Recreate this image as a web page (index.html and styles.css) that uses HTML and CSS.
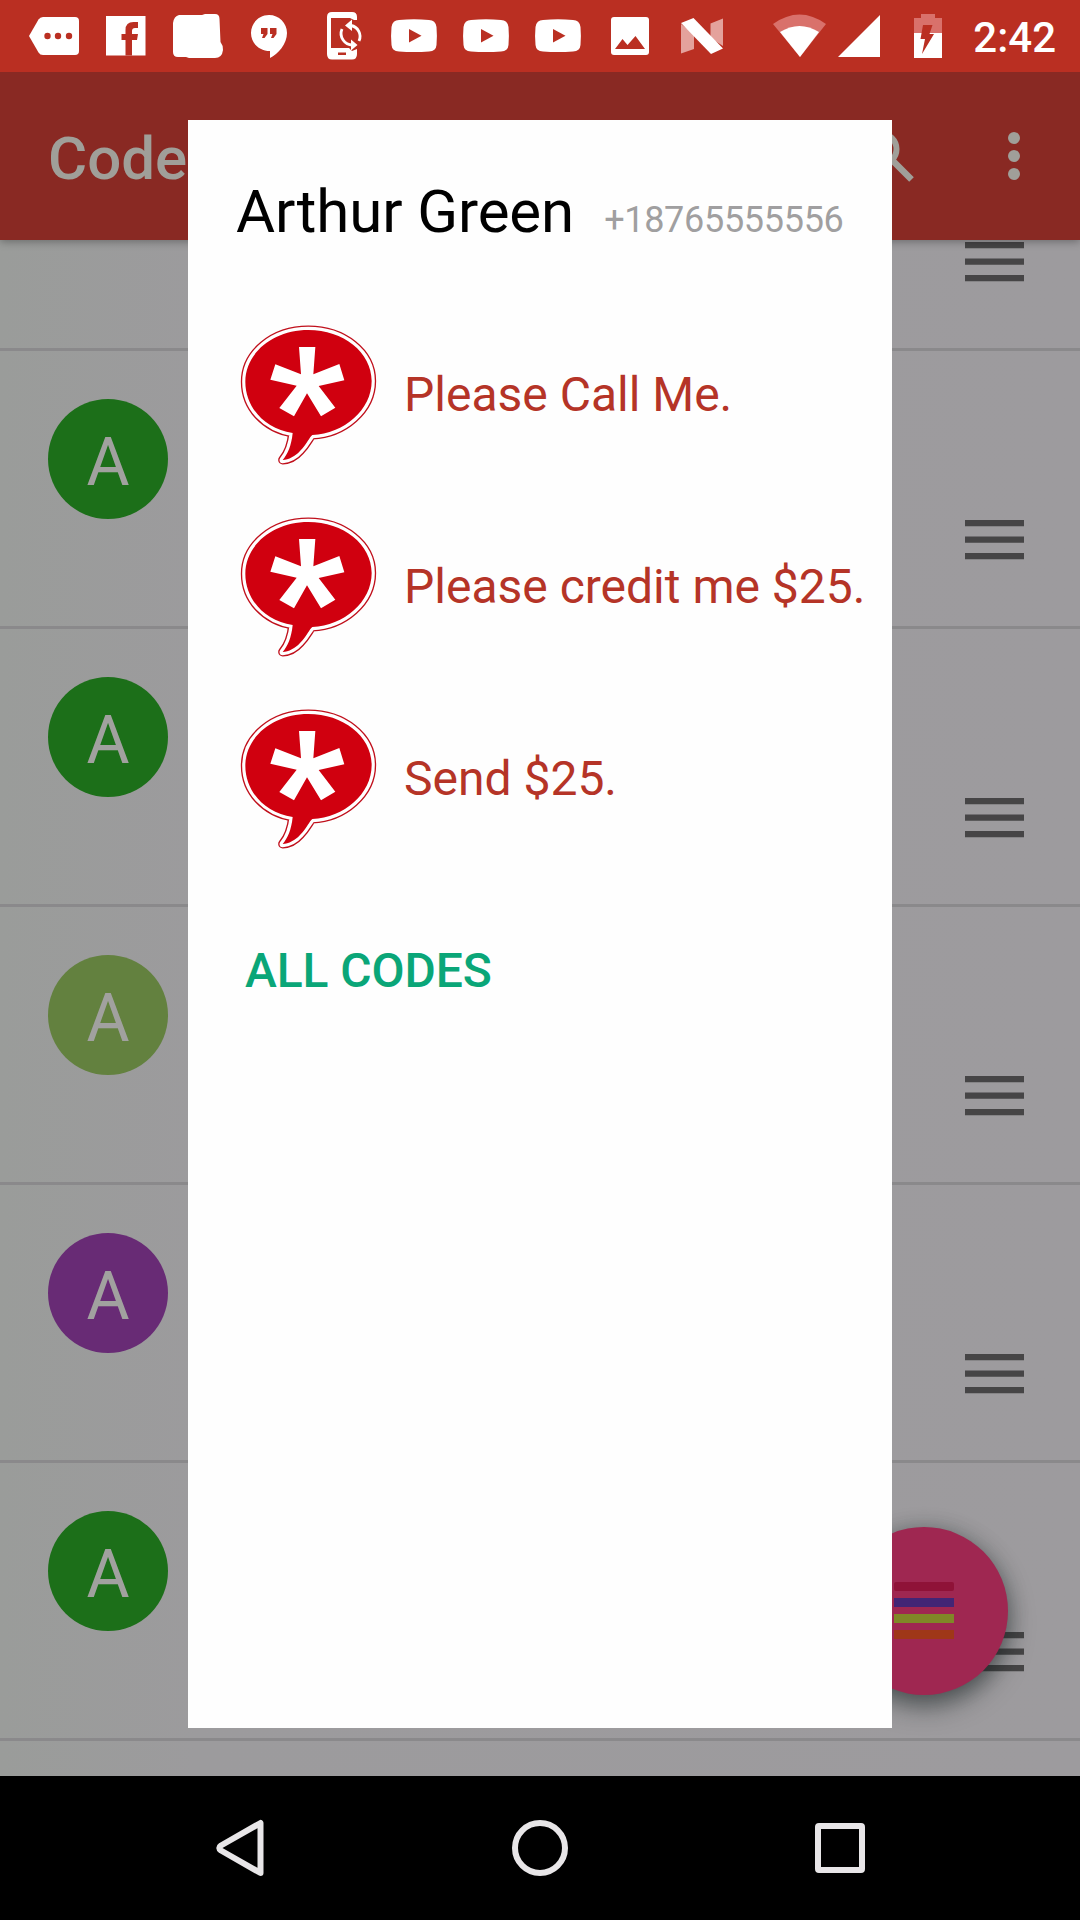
FILE: index.html
```html
<!DOCTYPE html>
<html lang="en">
<head>
<meta charset="utf-8">
<title>Codes</title>
<link rel="stylesheet" href="styles.css">
</head>
<body>
<svg class="defs" width="0" height="0">
  <defs>
    <symbol id="bubble" viewBox="60 45 411 423">
      <path class="b-rim" d="M265 60C370 60 455 127 455 213C455 300 372 371 277 375C268 381 263 400 240 423C226 439 206 449 188 450C203 432 214 408 218 369C135 356 76 293 76 215C76 130 158 60 265 60Z"/>
      <path class="b-fill" d="M265 60C370 60 455 127 455 213C455 300 372 371 277 375C268 381 263 400 240 423C226 439 206 449 188 450C203 432 214 408 218 369C135 356 76 293 76 215C76 130 158 60 265 60Z"/>
      <path fill="#fff" d="M237 111H286L280 193L358 162L373 211L296 228L346 293L303 319L261 250L222 319L178 294L230 227L151 209L166 163L243 193Z"/>
    </symbol>
    <symbol id="tube" viewBox="0 0 72 72">
      <path fill="#fff" d="M21 20Q36 18.500 51 20Q57.500 20 58.500 27Q59.300 36 58.500 45Q58 51 51 51.500Q36 52.700 21 51.500Q14 51 13.500 45Q12.600 36 13.500 27Q14.500 20 21 20Z"/>
      <path fill="#ba2f22" d="M31 29V42.500L43.500 35.700Z"/>
    </symbol>
    <symbol id="grip" viewBox="0 0 59 40">
      <path d="M0 0H59V6.300H0ZM0 16.500H59V22.800H0ZM0 33H59V39.300H0Z" fill="#464546"/>
    </symbol>
  </defs>
</svg>
<div class="phone">
  <header class="status">
    <div class="notices">
      <svg viewBox="0 0 72 72"><path fill="#fff" d="M25 17H57Q61 17 61 21V51Q61 55 57 55H25Q22 55 20.500 52.500L11 36L20.500 19.500Q22 17 25 17Z"/><g fill="#ba2f22"><circle cx="29.500" cy="36" r="3.200"/><circle cx="40" cy="36" r="3.200"/><circle cx="51" cy="36" r="3.200"/></g></svg>
      <svg viewBox="0 0 72 72"><path fill="#fff" d="M16 16H55.500V55.500H16Z"/><path fill="#ba2f22" d="M35.500 55.500V40H31.500V34H35.500V30Q35.500 22 43.500 22H48V28H45Q42 28 42 31V34H48L47 40H42V55.500Z"/></svg>
      <svg viewBox="0 0 72 72"><path fill="#fff" d="M17 15H40L43 14H53Q57.500 14 57.500 19L58.500 42Q61 45 61 50Q60 58 53 58H27L24 57H16Q11 57 11 52V23Q12 16 17 15Z"/></svg>
      <svg viewBox="0 0 72 72"><path fill="#fff" d="M35 15C45 15 53 23 53 33C53 44 44 54 36 58V51C25 51 17 43 17 33C17 23 25 15 35 15Z"/><path fill="#ba2f22" d="M27 28H33.500V34L30.500 38H28L29.500 34H27ZM36 28H42.500V34L39.500 38H37L38.500 34H36Z"/></svg>
      <svg viewBox="0 0 72 72"><path fill="#fff" d="M26 12H46Q51 12 51 17V20H48L44 18H25V48H43L46 51L51 49V54Q51 59.500 46 59.500H26Q21 59.500 21 54V17Q21 12 26 12Z"/><path fill="#ba2f22" d="M32 52.500H40V55H32Z"/><g fill="none" stroke="#fff" stroke-width="2.800"><path d="M45 25.500A11 11 0 0 1 53 41"/><path d="M36 29A11.500 11.500 0 0 0 47 45"/></g><path fill="#fff" d="M46 19.500V31L39 25.500ZM45 39.500V50.500L51.500 45Z"/></svg>
      <svg><use href="#tube"/></svg>
      <svg><use href="#tube"/></svg>
      <svg><use href="#tube"/></svg>
      <svg viewBox="0 0 72 72"><rect x="17" y="17" width="38" height="38" rx="3" fill="#fff"/><path fill="#ba2f22" d="M21 49L28.500 39L33.500 45L41.500 36L51 49Z"/></svg>
      <svg viewBox="0 0 72 72"><path fill="#e4a29c" d="M15 24L28 34V49L15 53.500ZM44.500 23.500L57 18.500V46L44.500 38Z"/><path fill="#fff" d="M15 23L27.500 18L57 48.500L45 54Z"/></svg>
    </div>
    <div class="system">
      <svg class="wifi" viewBox="0 0 54 72"><path fill="#d9716b" d="M0 24Q26.500 5 53 24L27 57Z"/><path fill="#fff" d="M7 32Q26.500 20 46 32L27 57Z"/></svg>
      <svg class="signal" viewBox="0 0 42 72"><path fill="#fff" d="M42 15V57H0Z"/></svg>
      <svg class="battery" viewBox="0 0 28 72"><path fill="#d9716b" d="M0 18H7V14H21V18H28V34H0Z"/><path fill="#fff" d="M0 33H28V58H0Z"/><path fill="#ba2f22" d="M9 25H18.500L15.500 34H20L8 54L11 39H6.500Z"/></svg>
      <span class="clock">2:42</span>
    </div>
  </header>
  <div class="appbar">
    <h1 class="title">Code</h1>
    <div class="actions">
      <svg class="search" viewBox="0 0 54 54"><circle cx="20" cy="20" r="15.500" fill="none" stroke="#a09f99" stroke-width="6"/><path d="M32 32L50.500 50.500" stroke="#a09f99" stroke-width="6.500"/></svg>
      <svg class="more" viewBox="0 0 12 48"><g fill="#a09f99"><circle cx="6" cy="6" r="6"/><circle cx="6" cy="24" r="6"/><circle cx="6" cy="42" r="6"/></g></svg>
    </div>
  </div>
  <main class="list">
    <div class="row first"><svg class="grip"><use href="#grip"/></svg></div>
    <div class="row"><span class="avatar green">A</span><svg class="grip"><use href="#grip"/></svg></div>
    <div class="row"><span class="avatar green">A</span><svg class="grip"><use href="#grip"/></svg></div>
    <div class="row"><span class="avatar olive">A</span><svg class="grip"><use href="#grip"/></svg></div>
    <div class="row"><span class="avatar purple">A</span><svg class="grip"><use href="#grip"/></svg></div>
    <div class="row"><span class="avatar green">A</span><svg class="grip"><use href="#grip"/></svg></div>
  </main>
  <div class="fab"><i class="bar crimson"></i><i class="bar indigo"></i><i class="bar lime"></i><i class="bar rust"></i></div>
  <nav class="navbar">
    <svg viewBox="0 0 60 60"><path d="M50.500 5V55L11 32.500Q7.500 30 11 27.500Z"/></svg>
    <svg viewBox="0 0 60 60"><circle cx="30" cy="30" r="25"/></svg>
    <svg viewBox="0 0 60 60"><rect x="8" y="8" width="44" height="44" rx="1"/></svg>
  </nav>
  <section class="dialog">
    <div class="who"><h2 class="name">Arthur Green</h2><span class="number">+18765555556</span></div>
    <ul class="codes">
      <li class="code"><svg class="bubble"><use href="#bubble"/></svg><span>Please Call Me.</span></li>
      <li class="code"><svg class="bubble"><use href="#bubble"/></svg><span>Please credit me $25.</span></li>
      <li class="code"><svg class="bubble"><use href="#bubble"/></svg><span>Send $25.</span></li>
    </ul>
    <button class="all">ALL CODES</button>
  </section>
</div>
</body>
</html>
```
FILE: styles.css
```css
* { box-sizing: border-box; }
body { margin: 0; background: #000; font-family: Roboto, "Liberation Sans", sans-serif; }
svg { display: block; flex: none; }
.defs { position: absolute; }
.phone { position: relative; display: flex; flex-direction: column; width: 1080px; height: 1920px; overflow: hidden; }

.status { position: relative; z-index: 2; flex: none; display: flex; justify-content: space-between; height: 72px; padding: 0 24px 0 18px; background: #ba2f22; }
.notices { display: flex; }
.notices svg { width: 72px; height: 72px; }
.system { display: flex; align-items: center; }
.wifi { width: 54px; height: 72px; margin-right: 11px; }
.signal { width: 42px; height: 72px; margin-right: 34px; }
.battery { width: 28px; height: 72px; margin-right: 31px; }
.clock { color: #fff; font-size: 42px; font-weight: 500; line-height: 72px; padding-top: 3px; }

.appbar { position: relative; z-index: 1; flex: none; display: flex; justify-content: space-between; align-items: center; height: 168px; padding: 0 60px 0 48px; background: #892923; box-shadow: 0 2px 8px rgba(0,0,0,.3); }
.title { margin: 0; padding-top: 5px; color: #a09f99; font-size: 60px; font-weight: 500; line-height: 70px; }
.actions { display: flex; align-items: center; gap: 93px; }
.search { width: 54px; height: 54px; }
.more { width: 12px; height: 48px; }

.list { flex: 1; background: linear-gradient(90deg, #9a9c9a, #9c9b9d 18%, #9d9b9e); overflow: hidden; }
.row { display: flex; justify-content: space-between; height: 278px; padding: 48px 56px 0 48px; border-bottom: 3px solid #8a898b; }
.row.first { justify-content: flex-end; height: 111px; padding-top: 0; }
.avatar { display: flex; align-items: center; justify-content: center; width: 120px; height: 120px; padding-top: 7px; border-radius: 50%; color: #a1a19f; font-size: 66px; }
.green { background: #1c6f19; }
.olive { background: #63813f; }
.purple { background: #682b75; }
.grip { width: 59px; height: 40px; margin-top: 121px; }
.first .grip { margin-top: 2px; }

.fab { position: absolute; left: 840px; top: 1527px; display: flex; flex-direction: column; align-items: center; justify-content: center; gap: 7px; width: 168px; height: 168px; padding-bottom: 2px; border-radius: 50%; background: #9f2751; box-shadow: 0 12px 24px rgba(20,30,30,.5), 0 0 20px rgba(20,30,30,.25); }
.bar { width: 60px; height: 9px; }
.crimson { background: #8f1238; border-radius: 2px; }
.indigo { background: #432575; }
.lime { background: #808727; }
.rust { background: #9f3718; }

.navbar { flex: none; display: flex; justify-content: space-between; align-items: center; height: 144px; padding: 0 210px; background: #000; }
.navbar svg { width: 60px; height: 60px; fill: none; stroke: #e8e6e8; stroke-width: 6; stroke-linejoin: round; }

.dialog { position: absolute; z-index: 2; left: 188px; top: 120px; width: 704px; height: 1608px; padding: 56px 0 0 48px; background: #fefefe; }
.who { display: flex; align-items: center; gap: 30px; height: 70px; }
.name { margin: 0; color: #000; font-size: 60px; font-weight: 400; letter-spacing: -.1px; white-space: nowrap; }
.number { padding-top: 17px; color: #a09fa0; font-size: 36px; letter-spacing: -.3px; }
.codes { margin: 80px 0 0; padding: 0 0 0 4px; list-style: none; }
.code { display: flex; gap: 27px; height: 192px; color: #b53427; font-size: 48px; line-height: 138px; white-space: nowrap; }
.bubble { width: 137px; height: 141px; margin-top: -1px; }
.b-rim { fill: #cf0010; stroke: #c0101c; stroke-width: 27; stroke-linejoin: round; }
.b-fill { fill: #d0000f; stroke: #fff; stroke-width: 19; stroke-linejoin: round; paint-order: stroke; }
.all { margin: 41px 0 0 9px; padding: 0; border: 0; background: none; color: #0aa678; font: 500 48px/56px Roboto, sans-serif; letter-spacing: -.1px; }
```
